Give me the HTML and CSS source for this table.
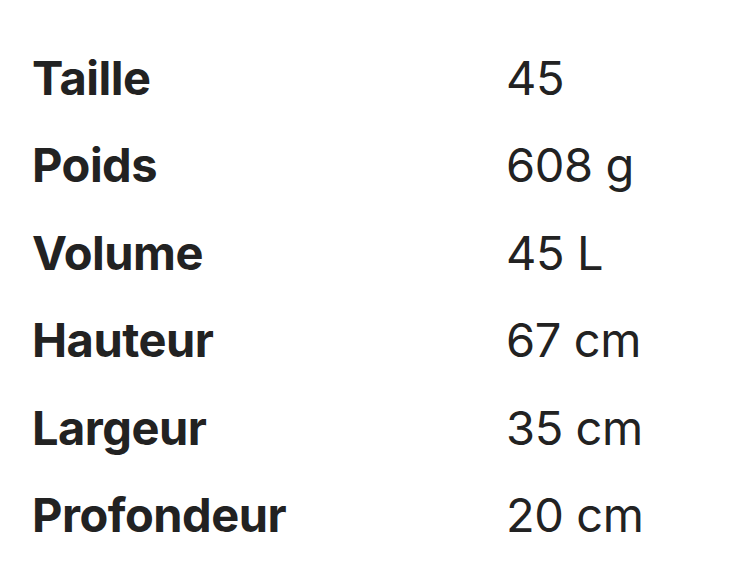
FILE: index.html
```html
<!DOCTYPE html>
<html lang="fr">
<head>
<meta charset="utf-8">
<link rel="stylesheet" href="styles.css">
</head>
<body>
<dl class="specs">
  <div class="row"><dt>Taille</dt><dd>45</dd></div>
  <div class="row"><dt>Poids</dt><dd>608 g</dd></div>
  <div class="row"><dt>Volume</dt><dd>45 L</dd></div>
  <div class="row"><dt>Hauteur</dt><dd>67 cm</dd></div>
  <div class="row"><dt>Largeur</dt><dd>35 cm</dd></div>
  <div class="row"><dt>Profondeur</dt><dd>20 cm</dd></div>
</dl>
</body>
</html>
```
FILE: styles.css
```css
html, body {
  margin: 0;
  padding: 0;
  background: #ffffff;
}
.specs {
  margin: 0;
  padding: 34px 0 0 32px;
  font-family: Inter, "Noto Sans", sans-serif;
  color: #222222;
  font-size: 47px;
}
.row {
  display: grid;
  grid-template-columns: 474px auto;
  height: 87.4px;
  line-height: 87.4px;
}
.row dt {
  font-weight: 700;
  margin: 0;
  letter-spacing: -0.5px;
}
.row dd {
  font-weight: 400;
  margin: 0;
  letter-spacing: -0.4px;
}
```
